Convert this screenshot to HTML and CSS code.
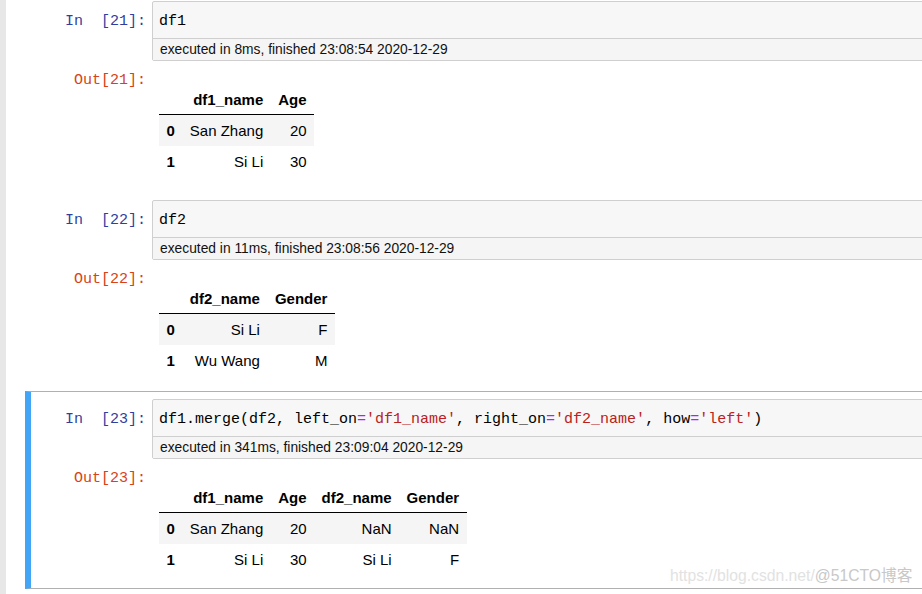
FILE: index.html
```html
<!DOCTYPE html>
<html>
<head>
<meta charset="utf-8">
<link rel="stylesheet" href="styles.css">
</head>
<body>
<div class="page">
  <div class="strip"></div>
  <div class="nb">
    <div class="cell">
      <div class="inrow">
        <div class="prompt in">In  [21]:</div>
        <div class="box">
          <div class="code">df1</div>
          <div class="time">executed in 8ms, finished 23:08:54 2020-12-29</div>
        </div>
      </div>
      <div class="outrow">
        <div class="prompt out">Out[21]:</div>
        <div class="result">
          <table class="df">
            <thead><tr><th></th><th>df1_name</th><th>Age</th></tr></thead>
            <tbody>
              <tr><th>0</th><td>San Zhang</td><td>20</td></tr>
              <tr><th>1</th><td>Si Li</td><td>30</td></tr>
            </tbody>
          </table>
        </div>
      </div>
    </div>
    <div class="cell">
      <div class="inrow">
        <div class="prompt in">In  [22]:</div>
        <div class="box">
          <div class="code">df2</div>
          <div class="time">executed in 11ms, finished 23:08:56 2020-12-29</div>
        </div>
      </div>
      <div class="outrow">
        <div class="prompt out">Out[22]:</div>
        <div class="result">
          <table class="df">
            <thead><tr><th></th><th>df2_name</th><th>Gender</th></tr></thead>
            <tbody>
              <tr><th>0</th><td>Si Li</td><td>F</td></tr>
              <tr><th>1</th><td>Wu Wang</td><td>M</td></tr>
            </tbody>
          </table>
        </div>
      </div>
    </div>
    <div class="cell selected">
      <div class="inrow">
        <div class="prompt in">In  [23]:</div>
        <div class="box">
          <div class="code">df1.merge(df2, left_on<span class="op">=</span><span class="str">'df1_name'</span>, right_on<span class="op">=</span><span class="str">'df2_name'</span>, how<span class="op">=</span><span class="str">'left'</span>)</div>
          <div class="time">executed in 341ms, finished 23:09:04 2020-12-29</div>
        </div>
      </div>
      <div class="outrow">
        <div class="prompt out">Out[23]:</div>
        <div class="result">
          <table class="df">
            <thead><tr><th></th><th>df1_name</th><th>Age</th><th>df2_name</th><th>Gender</th></tr></thead>
            <tbody>
              <tr><th>0</th><td>San Zhang</td><td>20</td><td>NaN</td><td>NaN</td></tr>
              <tr><th>1</th><td>Si Li</td><td>30</td><td>Si Li</td><td>F</td></tr>
            </tbody>
          </table>
        </div>
      </div>
    </div>
  </div>
  <div class="wm"><span class="wm1">https://blog.csdn.net/</span><span class="wm2">@51CTO博客</span></div>
</div>
</body>
</html>
```
FILE: styles.css
```css
html, body {
  margin: 0;
  padding: 0;
  background: #ffffff;
  overflow: hidden;
}
.page {
  position: relative;
  display: flex;
  width: 922px;
  height: 594px;
  overflow: hidden;
}
.strip {
  flex: none;
  width: 6px;
  background: #e7e7e7;
}
.nb {
  flex: none;
  width: 1000px;
  padding-left: 19px;
  margin-top: -7px;
}
.cell {
  border: 1px solid transparent;
  border-left: 6px solid transparent;
  padding-top: 7px;
  margin-bottom: 1px;
}
.cell.selected {
  border-color: #b0b0b0;
  border-left-color: #42a5f5;
}
.inrow, .outrow {
  display: flex;
  align-items: flex-start;
}
.prompt {
  flex: none;
  width: 121px;
  box-sizing: border-box;
  padding-right: 6px;
  text-align: right;
  font-family: "Liberation Mono", monospace;
  font-size: 15px;
  white-space: pre;
}
.prompt.in {
  color: #303f9f;
  line-height: 36px;
  margin-top: 3px;
}
.prompt.out {
  color: #d84315;
  line-height: 20px;
  padding-top: 10px;
}
.box {
  flex: 1;
  border: 1px solid #cfcfcf;
  border-radius: 2px;
  background: #f7f7f7;
}
.code {
  font-family: "Liberation Mono", monospace;
  font-size: 15px;
  line-height: 32px;
  height: 32px;
  padding: 4px 0 0 6px;
  color: #000;
  white-space: pre;
}
.code .op { color: #aa22ff; }
.code .str { color: #ba2121; }
.time {
  border-top: 1px solid #cfcfcf;
  background: #f5f5f5;
  font-family: "Liberation Sans", Arial, sans-serif;
  font-size: 13.8px;
  line-height: 21px;
  height: 21px;
  padding-left: 7px;
  color: #111;
}
.outrow {
  padding-bottom: 13px;
}
.result {
  padding-left: 7px;
}
.df {
  margin-top: 23px;
  border-collapse: collapse;
  border-spacing: 0;
  font-family: "Liberation Sans", Arial, sans-serif;
  font-size: 15px;
  color: #000;
}
.df th, .df td {
  padding: 7px 7.5px;
  line-height: 17px;
  text-align: right;
  white-space: nowrap;
  vertical-align: middle;
}
.df th { font-weight: bold; }
.df thead th {
  padding-bottom: 6px;
  border-bottom: 1px solid #000;
}
.df tbody tr:nth-child(odd) { background: #f5f5f5; }
.wm {
  position: absolute;
  left: 670px;
  top: 566px;
  font-family: "Liberation Sans", "Noto Sans CJK SC", sans-serif;
  font-size: 15.7px;
  line-height: 20px;
  white-space: nowrap;
}
.wm1 { color: #e2e2e2; }
.wm2 { color: #c8c8c8; }
```
